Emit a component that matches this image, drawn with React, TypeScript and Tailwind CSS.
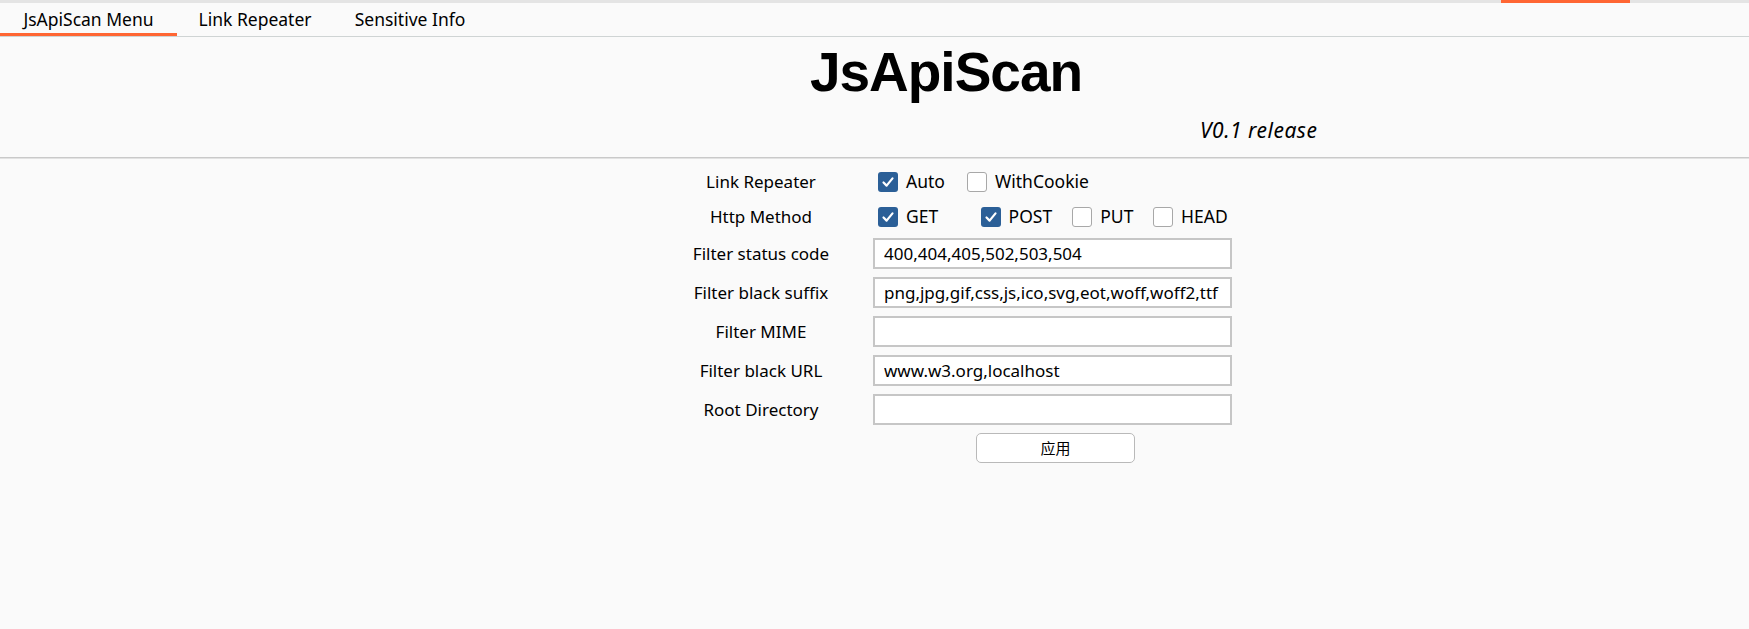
import React from "react";

function Check({ checked }: { checked: boolean }) {
  if (checked) {
    return (
      <span className="flex h-[20px] w-[20px] shrink-0 items-center justify-center rounded-[3px] bg-[#2b5f97]">
        <svg width="14" height="14" viewBox="0 0 14 14">
          <path d="M2.5 7.5 L5.6 10.6 L11.5 3.4" fill="none" stroke="#ffffff" strokeWidth="2.2" strokeLinecap="round" strokeLinejoin="round" />
        </svg>
      </span>
    );
  }
  return <span className="h-[20px] w-[20px] shrink-0 rounded-[3px] border-[1.5px] border-[#a8a8a8] bg-white" />;
}

function CheckItem({ label, checked, w }: { label: string; checked: boolean; w: string }) {
  return (
    <div className={`flex items-center gap-[8px] ${w}`}>
      <Check checked={checked} />
      <span className="whitespace-nowrap text-[17.5px]">{label}</span>
    </div>
  );
}

function Label({ children }: { children: React.ReactNode }) {
  return <div className="flex items-center justify-center whitespace-nowrap text-[17px]">{children}</div>;
}

function Field({ value }: { value: string }) {
  return (
    <input
      readOnly
      defaultValue={value}
      className="h-[31px] w-[359px] border-2 border-[#c6c6c6] bg-white px-[9px] text-[17px] text-black outline-none"
      style={{ fontFamily: "'Noto Sans', 'Noto Sans CJK SC', sans-serif" }}
    />
  );
}

export default function App() {
  return (
    <div className="h-[629px] w-[1749px] overflow-hidden bg-[#fafafa] font-['Noto_Sans','Noto_Sans_CJK_SC',sans-serif] text-[16px] text-black">
      <div className="flex h-[3px] bg-[#e4e4e4]">
        <div className="ml-[1501px] h-[3px] w-[129px] bg-[#ff6633]" />
      </div>
      <div className="flex h-[34px] border-b border-[#cfd4d4] text-[17.5px]">
        <div className="relative flex w-[177px] items-center justify-center">
          <span>JsApiScan Menu</span>
          <div className="absolute bottom-0 left-0 h-[3px] w-full bg-[#ff6633]" />
        </div>
        <div className="flex w-[156px] items-center justify-center">Link Repeater</div>
        <div className="flex w-[154px] items-center justify-center">Sensitive Info</div>
      </div>

      <div className="mt-[8px] flex justify-center pl-[143px]">
        <h1 className="font-['Liberation_Sans',Arial,sans-serif] text-[55px] font-bold leading-none tracking-[-1px]">JsApiScan</h1>
      </div>
      <div className="mt-[18px] pl-[1200px] text-[21px] italic leading-[25px] tracking-[0.5px]">V0.1 release</div>
      <div className="mt-[14px] h-[1px] bg-[#c9c9c9]" />
      <div className="h-[1px] bg-[#e2e2e2]" />

      <div className="ml-[676px] mt-[9px] grid grid-cols-[170px_359px] gap-x-[27px] gap-y-[8px]">
        <Label>
          <span className="h-[27px] leading-[27px]">Link Repeater</span>
        </Label>
        <div className="flex h-[27px] items-center pl-[5px]">
          <CheckItem label="Auto" checked w="w-[89px]" />
          <CheckItem label="WithCookie" checked={false} w="w-[120px]" />
        </div>

        <Label>
          <span className="h-[27px] leading-[27px]">Http Method</span>
        </Label>
        <div className="flex h-[27px] items-center pl-[5px]">
          <CheckItem label="GET" checked w="w-[104px]" />
          <CheckItem label="POST" checked w="w-[93px]" />
          <CheckItem label="PUT" checked={false} w="w-[82px]" />
          <CheckItem label="HEAD" checked={false} w="w-[80px]" />
        </div>

        <Label>Filter status code</Label>
        <Field value="400,404,405,502,503,504" />

        <Label>Filter black suffix</Label>
        <Field value="png,jpg,gif,css,js,ico,svg,eot,woff,woff2,ttf" />

        <Label>Filter MIME</Label>
        <Field value="" />

        <Label>Filter black URL</Label>
        <Field value="www.w3.org,localhost" />

        <Label>Root Directory</Label>
        <Field value="" />

        <div />
        <div className="pl-[103px]">
          <button className="flex h-[30px] w-[159px] items-center justify-center rounded-[5px] border-[1.5px] border-[#b9b9b9] bg-white text-[15px] text-black font-['Noto_Sans_CJK_SC',sans-serif]">
            应用
          </button>
        </div>
      </div>
    </div>
  );
}
